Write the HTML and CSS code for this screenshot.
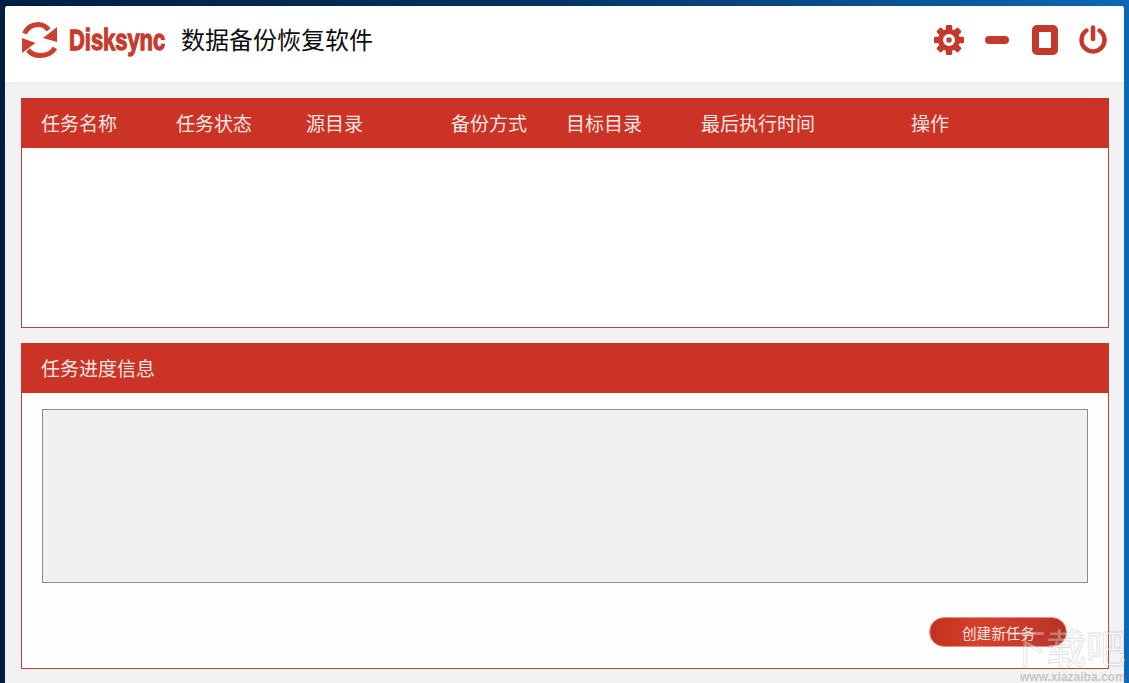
FILE: index.html
```html
<!DOCTYPE html>
<html lang="zh">
<head>
<meta charset="utf-8">
<title>Disksync</title>
<link rel="stylesheet" href="styles.css">
</head>
<body>
<div class="window">
  <header class="topbar">
    <div class="brand">
      <svg class="logo" viewBox="0 0 36 36" width="36" height="36">
        <path class="logo-arc" d="M2.500 11.500C5 6 10 2.500 16.500 2.500C20.500 2.500 24 4.500 26.500 8"/>
        <path class="logo-fill" d="M35 5L35 20L21 16Z"/>
        <path class="logo-arc" d="M33 26C30 31 24 33.500 17.500 33.500C13 33.500 9 31.500 6 28"/>
        <path class="logo-fill" d="M0 16L0 31L13.500 21Z"/>
      </svg>
      <span class="wordmark"><span class="wordmark-text">Disksync</span></span>
      <span class="app-title">数据备份恢复软件</span>
    </div>
    <div class="controls">
      <svg class="ctl" viewBox="0 0 32 32" width="32" height="32">
        <g class="gear-teeth">
          <rect x="12.800" y="1" width="6.400" height="30" rx="1.200"/>
          <rect x="12.800" y="1" width="6.400" height="30" rx="1.200" transform="rotate(45 16 16)"/>
          <rect x="12.800" y="1" width="6.400" height="30" rx="1.200" transform="rotate(90 16 16)"/>
          <rect x="12.800" y="1" width="6.400" height="30" rx="1.200" transform="rotate(135 16 16)"/>
        </g>
        <circle class="gear-body" cx="16" cy="16" r="11"/>
        <circle class="gear-ring" cx="16" cy="16" r="6"/>
        <circle class="gear-hole" cx="16" cy="16" r="2.800"/>
      </svg>
      <svg class="ctl" viewBox="0 0 32 32" width="32" height="32">
        <rect class="ctl-fill" x="4" y="12" width="24" height="8" rx="4"/>
      </svg>
      <svg class="ctl" viewBox="0 0 32 32" width="32" height="32">
        <rect class="ctl-box" x="6.500" y="4.500" width="19" height="23" rx="1.500"/>
      </svg>
      <svg class="ctl" viewBox="0 0 32 32" width="32" height="32">
        <path class="ctl-line" d="M9.500 6.500A11.500 11.500 0 1 0 22.500 6.500"/>
        <path class="ctl-line" d="M16 3.500V15"/>
      </svg>
    </div>
  </header>
  <main class="content">
    <section class="panel panel-tasks">
      <div class="panel-head">
        <span class="col">任务名称</span>
        <span class="col">任务状态</span>
        <span class="col">源目录</span>
        <span class="col">备份方式</span>
        <span class="col">目标目录</span>
        <span class="col">最后执行时间</span>
        <span class="col">操作</span>
      </div>
    </section>
    <section class="panel panel-progress">
      <div class="panel-head"><span class="col">任务进度信息</span></div>
      <div class="panel-body">
        <div class="log-box"></div>
        <div class="actions"><button class="create-btn">创建新任务</button></div>
      </div>
    </section>
  </main>
</div>
<div class="watermark"><span class="wm-big">下载吧</span><span class="wm-url">www.xiazaiba.com</span></div>
</body>
</html>
```
FILE: styles.css
```css
* { box-sizing: border-box; }
html, body { margin: 0; height: 100%; }
body {
  width: 1129px;
  height: 683px;
  overflow: hidden;
  padding: 6px 5px 0 5px;
  background: linear-gradient(90deg, #021e44 0%, #03305f 45%, #0d68b4 100%);
  font-family: "Liberation Sans", "Noto Sans CJK SC", sans-serif;
  position: relative;
}
.window {
  width: 1119px;
  height: 677px;
  background: #f2f2f4;
  border-radius: 3px 3px 0 0;
  display: flex;
  flex-direction: column;
}
.topbar {
  height: 76px;
  flex: none;
  background: #fff;
  border-radius: 3px 3px 0 0;
  box-shadow: 0 1px 4px rgba(0,0,0,.05);
  display: flex;
  align-items: center;
  justify-content: space-between;
  padding: 0 15px 8px 17px;
}
.brand { display: flex; align-items: center; }
.logo { flex: none; }
.logo-arc { fill: none; stroke: #c9402f; stroke-width: 5; }
.logo-fill { fill: #c9402f; }
.wordmark {
  flex: none;
  margin-left: 11px;
  width: 112px;
  white-space: nowrap;
}
.wordmark-text {
  display: inline-block;
  transform: scaleX(.73);
  transform-origin: left center;
  font-family: "Liberation Sans", sans-serif;
  font-weight: 700;
  font-size: 30px;
  color: #c63c2c;
  -webkit-text-stroke: 1.300px #c63c2c;
}
.app-title {
  margin-top: -3px;
  font-family: "Noto Sans CJK SC", sans-serif;
  font-size: 24px;
  color: #0c0c0c;
}
.controls { display: flex; gap: 16px; }
.ctl { display: block; }
.gear-teeth { fill: #c23a2c; }
.gear-body { fill: #c23a2c; }
.gear-ring { fill: #fff; }
.gear-hole { fill: #b8453a; }
.ctl-fill { fill: #c23a2c; }
.ctl-box { fill: #fff; stroke: #c23a2c; stroke-width: 7; }
.ctl-line { fill: none; stroke: #c23a2c; stroke-width: 4.500; stroke-linecap: round; }
.content {
  flex: 1;
  padding: 16px 15px 0 16px;
  display: flex;
  flex-direction: column;
  gap: 15px;
}
.panel {
  background: #fff;
  border: 1px solid #b9473c;
  border-top: none;
}
.panel-tasks { height: 230px; }
.panel-progress { height: 326px; display: flex; flex-direction: column; background: #fffefe; }
.panel-head {
  height: 50px;
  margin: 0 -1px;
  background: #ca3325;
  color: #f8e6e2;
  font-family: "Noto Sans CJK SC", sans-serif;
  font-size: 19px;
  display: grid;
  grid-template-columns: 135px 130px 145px 115px 135px 210px 1fr;
  align-items: center;
  padding-left: 20px;
  padding-bottom: 1px;
}
.panel-progress .panel-head { grid-template-columns: 1fr; }
.panel-body { flex: 1; padding: 16px 20px 0; display: flex; flex-direction: column; }
.log-box {
  height: 174px;
  background: #f0eff1;
  border: 1px solid #8c8c8c;
}
.actions { display: flex; justify-content: flex-end; padding: 34px 21px 0 0; }
.create-btn {
  width: 138px;
  height: 30px;
  border: 1px solid #ef8f7c;
  border-radius: 15px;
  background: linear-gradient(90deg, #c5301f 0%, #d4402e 35%, #c93a2a 70%, #b83226 100%);
  color: #fbe6df;
  font-family: "Noto Sans CJK SC", sans-serif;
  font-size: 14.600px;
  padding: 0;
  text-indent: 32px;
  text-align: left;
}
.watermark {
  position: absolute;
  left: 1006px;
  top: 622px;
  width: 123px;
  font-family: "Noto Sans CJK SC", sans-serif;
  display: flex;
  flex-direction: column;
  align-items: flex-start;
  pointer-events: none;
}
.wm-big { font-size: 40px; line-height: 48px; white-space: nowrap; color: rgba(255,255,255,.35); -webkit-text-stroke: 1px rgba(110,110,115,.22); }
.wm-url { margin: 1px 0 0 14px; font-family: "Liberation Sans", sans-serif; font-weight: 700; font-size: 12px; line-height: 12px; white-space: nowrap; color: rgba(120,120,125,.38); }
```
